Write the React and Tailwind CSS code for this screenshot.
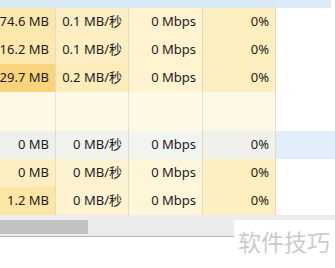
const rows = [
  { mem: "74.6 MB", disk: "0.1 MB/秒", net: "0 Mbps", gpu: "0%", c: ["bg-[#fce8ad]", "bg-[#fdefc3]", "bg-[#fff3d0]", "bg-[#fdefc0]"], fill: "bg-white" },
  { mem: "16.2 MB", disk: "0.1 MB/秒", net: "0 Mbps", gpu: "0%", c: ["bg-[#fce8ad]", "bg-[#fdefc3]", "bg-[#fff3d0]", "bg-[#fdefc0]"], fill: "bg-white" },
  { mem: "529.7 MB", disk: "0.2 MB/秒", net: "0 Mbps", gpu: "0%", c: ["bg-[#f9d47c]", "bg-[#fdedba]", "bg-[#fff3d0]", "bg-[#fdefc0]"], fill: "bg-white" },
];

const rows2 = [
  { mem: "0 MB", disk: "0 MB/秒", net: "0 Mbps", gpu: "0%", c: ["bg-[#eef0eb]", "bg-[#f1f3ef]", "bg-[#f2f4f0]", "bg-[#eff1ea]"], fill: "bg-[#e1eefa]" },
  { mem: "0 MB", disk: "0 MB/秒", net: "0 Mbps", gpu: "0%", c: ["bg-[#fdefc2]", "bg-[#fef3d0]", "bg-[#fff5d8]", "bg-[#fdefbf]"], fill: "bg-white" },
  { mem: "1.2 MB", disk: "0 MB/秒", net: "0 Mbps", gpu: "0%", c: ["bg-[#fbe6a6]", "bg-[#fef3d0]", "bg-[#fff5d8]", "bg-[#fdefbf]"], fill: "bg-white" },
];

const widths = ["w-[56px]", "w-[73px]", "w-[74px]", "w-[73px]"];

function Row({ r }) {
  const vals = [r.mem, r.disk, r.net, r.gpu];
  return (
    <div className="flex h-[28px]">
      {vals.map((v, i) => (
        <div
          key={i}
          className={`${widths[i]} ${r.c[i]} shrink-0 flex items-center justify-end pr-[6px] overflow-hidden whitespace-nowrap border-r border-[#e4dbc6]`}
        >
          {v}
        </div>
      ))}
      <div className={`flex-1 ${r.fill}`} />
    </div>
  );
}

export default function App() {
  return (
    <div
      className="relative w-[335px] h-[268px] bg-white overflow-hidden text-[13px] text-[#1c1c1c]"
      style={{ fontFamily: '"Noto Sans", "Noto Sans CJK SC", sans-serif' }}
    >
      {/* header strip */}
      <div className="flex h-[8px]">
        <div className="w-[276px] bg-[#d9e8f5]" />
        <div className="w-[55px] bg-[#dbeaf7]" />
        <div className="flex-1 bg-white" />
      </div>

      {rows.map((r, i) => (
        <Row key={i} r={r} />
      ))}

      {/* empty group row */}
      <div className="flex h-[39px]">
        {widths.map((w, i) => (
          <div key={i} className={`${w} shrink-0 bg-[#fef8e6] border-r border-[#e8e0cc]`} />
        ))}
        <div className="flex-1 bg-white" />
      </div>

      {rows2.map((r, i) => (
        <Row key={i} r={r} />
      ))}

      {/* horizontal scrollbar */}
      <div className="h-[21px] bg-[#ececec] pt-[5px]">
        <div className="w-[88px] h-[14px] bg-[#c2c2c2]" />
      </div>
      <div className="h-[1px] bg-[#b9b9b9]" />

      {/* watermark */}
      <div className="absolute left-[234px] top-[220px] right-0 bottom-0 bg-white pt-[10px] pl-[4px]">
        <span
          className="block whitespace-nowrap text-[23px] leading-[23px] text-[#cbcbcb]"
          style={{ fontFamily: '"Noto Sans CJK SC", sans-serif' }}
        >
          软件技巧
        </span>
      </div>
    </div>
  );
}
